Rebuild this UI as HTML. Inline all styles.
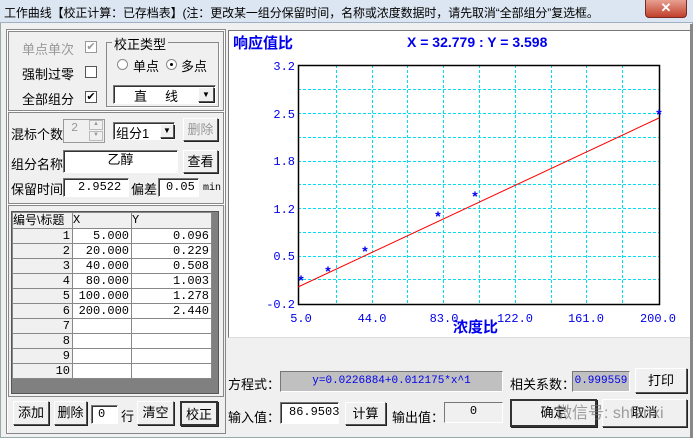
<!DOCTYPE html><html><head><meta charset="utf-8"><style>
*{margin:0;padding:0;box-sizing:border-box}
body{width:693px;height:438px;background:#f0f0f0;font-family:"Liberation Sans","Noto Sans CJK SC",sans-serif;font-size:13px;position:relative;overflow:hidden;color:#000}
.a{position:absolute}
.btn{position:absolute;background:#f0f0f0;border:1px solid;border-color:#fff #555 #555 #fff;box-shadow:1px 1px 0 #222;text-align:center;font-size:13px}
.sunk{position:absolute;background:#fff;border:1px solid;border-color:#777 #fff #fff #777;box-shadow:inset 1px 1px 0 #333}
.mono{font-family:"Liberation Mono","Noto Sans CJK SC",monospace;font-size:12px}
.cb{position:absolute;width:12px;height:12px;background:#fff;border:1px solid #555;font-size:11px;line-height:10px;text-align:center}
table{border-collapse:collapse}
td{border:1px solid #888;height:15px;font-family:"Liberation Mono",monospace;font-size:12px;text-align:right;padding-right:2px;line-height:13px}
</style></head><body>
<div class="a" style="left:0;top:0;width:693px;height:23px;background:#dce6f2;border-bottom:1px solid #a0b0c4"></div>
<div class="a" style="left:4px;top:4px;font-size:12px;white-space:nowrap;letter-spacing:-0.1px">工作曲线【校正计算：已存档表】(注：更改某一组分保留时间，名称或浓度数据时，请先取消“全部组分”复选框。</div>
<div class="a" style="left:645px;top:0;width:42px;height:18px;background:linear-gradient(#e8a090,#c0402c);border:1px solid #7a2a20;border-top:none;border-radius:0 0 4px 4px;color:#fff;text-align:center;font-weight:bold;line-height:16px">✕</div>
<div class="a" style="left:0;top:23px;width:693px;height:415px;border:1px solid #9aa;border-top:none;background:#f0f0f0"></div>
<div class="a" style="left:6px;top:29px;width:220px;height:405px;border:1px solid #888;box-shadow:inset 1px 1px 0 #fff"></div>
<div class="a" style="left:8px;top:31px;width:216px;height:80px;border:1px solid #888;box-shadow:1px 1px 0 #fff"></div>
<div class="a" style="left:22px;top:39px;color:#999">单点单次</div><div class="cb" style="left:85px;top:41px;color:#999;border-color:#999">✔</div>
<div class="a" style="left:22px;top:64px">强制过零</div><div class="cb" style="left:85px;top:66px"></div>
<div class="a" style="left:22px;top:89px">全部组分</div><div class="cb" style="left:85px;top:91px">✔</div>
<div class="a" style="left:106px;top:42px;width:113px;height:65px;border:1px solid #888;box-shadow:1px 1px 0 #fff"></div>
<div class="a" style="left:112px;top:34px;background:#f0f0f0;padding:0 2px">校正类型</div>
<div class="a" style="left:117px;top:59px;width:11px;height:11px;border:1px solid #888;border-radius:50%;background:#fff"></div>
<div class="a" style="left:133px;top:56px">单点</div>
<div class="a" style="left:166px;top:59px;width:11px;height:11px;border:1px solid #888;border-radius:50%;background:#fff"><div class="a" style="left:3px;top:3px;width:3px;height:3px;background:#000;border-radius:50%"></div></div>
<div class="a" style="left:181px;top:56px">多点</div>
<div class="sunk" style="left:113px;top:85px;width:103px;height:19px"></div>
<div class="a" style="left:134px;top:86px;letter-spacing:18px">直线</div>
<div class="btn" style="left:198px;top:87px;width:16px;height:15px;font-size:8px;line-height:13px">▼</div>
<div class="a" style="left:8px;top:112px;width:216px;height:92px;border:1px solid #888;box-shadow:1px 1px 0 #fff"></div>
<div class="a" style="left:11px;top:124px">混标个数</div>
<div class="a" style="left:63px;top:119px;width:42px;height:24px;border:1px solid #999"></div>
<div class="a mono" style="left:71px;top:121px;color:#999">2</div>
<div class="a" style="left:89px;top:120px;width:14px;height:10px;border:1px solid #bbb;font-size:6px;color:#999;text-align:center">▲</div>
<div class="a" style="left:89px;top:131px;width:14px;height:10px;border:1px solid #bbb;font-size:6px;color:#999;text-align:center">▼</div>
<div class="sunk" style="left:113px;top:122px;width:62px;height:18px"></div>
<div class="a" style="left:116px;top:123px">组分1</div>
<div class="btn" style="left:160px;top:124px;width:14px;height:14px;font-size:8px;line-height:12px">▼</div>
<div class="btn" style="left:183px;top:118px;width:35px;height:23px;color:#999;line-height:21px">删除</div>
<div class="a" style="left:11px;top:154px">组分名称</div>
<div class="sunk" style="left:63px;top:150px;width:115px;height:23px;text-align:center;line-height:18px">乙醇</div>
<div class="btn" style="left:183px;top:150px;width:35px;height:23px;line-height:21px">查看</div>
<div class="a" style="left:11px;top:179px">保留时间</div>
<div class="sunk mono" style="left:63px;top:178px;width:66px;height:19px;padding-left:14px;line-height:17px">2.9522</div>
<div class="a" style="left:131px;top:179px">偏差</div>
<div class="sunk mono" style="left:158px;top:178px;width:41px;height:19px;padding-left:7px;line-height:17px">0.05</div>
<div class="a mono" style="left:203px;top:183px;font-size:10px">min</div>
<div class="a" style="left:8px;top:205px;width:216px;height:192px;border:1px solid #888"></div>
<div class="a" style="left:11px;top:211px;width:208px;height:183px;background:#808080;border:1px solid #555"></div>
<table class="a" style="left:12px;top:212px;width:200px;background:#fff">
<tr><td style="width:60px;background:#f0f0f0;text-align:left;font-family:'Liberation Sans','Noto Sans CJK SC',sans-serif;padding:0;height:16px">编号\标题</td><td style="width:59px;text-align:left;background:#f0f0f0">X</td><td style="text-align:left;background:#f0f0f0">Y</td></tr>
<tr><td style="background:#f0f0f0">1</td><td>5.000</td><td>0.096</td></tr>
<tr><td style="background:#f0f0f0">2</td><td>20.000</td><td>0.229</td></tr>
<tr><td style="background:#f0f0f0">3</td><td>40.000</td><td>0.508</td></tr>
<tr><td style="background:#f0f0f0">4</td><td>80.000</td><td>1.003</td></tr>
<tr><td style="background:#f0f0f0">5</td><td>100.000</td><td>1.278</td></tr>
<tr><td style="background:#f0f0f0">6</td><td>200.000</td><td>2.440</td></tr>
<tr><td style="background:#f0f0f0">7</td><td></td><td></td></tr>
<tr><td style="background:#f0f0f0">8</td><td></td><td></td></tr>
<tr><td style="background:#f0f0f0">9</td><td></td><td></td></tr>
<tr><td style="background:#f0f0f0">10</td><td></td><td></td></tr>
</table>
<div class="btn" style="left:13px;top:401px;width:36px;height:24px;line-height:22px">添加</div>
<div class="btn" style="left:54px;top:401px;width:33px;height:24px;line-height:22px">删除</div>
<div class="sunk mono" style="left:91px;top:405px;width:27px;height:19px;padding-left:6px;line-height:17px">0</div>
<div class="a" style="left:121px;top:406px">行</div>
<div class="btn" style="left:137px;top:401px;width:37px;height:24px;line-height:22px">清空</div>
<div class="btn" style="left:180px;top:401px;width:38px;height:25px;line-height:23px;border:2px solid #333">校正</div>
<div class="a" style="left:228px;top:30px;width:463px;height:308px;background:#fff;border:1px solid;border-color:#777 #ddd #ddd #777"></div>
<div class="a" style="left:690px;top:24px;width:3px;height:414px;background:#888"></div>
<svg class="a" style="left:0;top:0" width="693" height="438" font-family="Liberation Mono,monospace" font-size="12" fill="#0000ee">
<text x="233" y="48" font-family="Liberation Sans,Noto Sans CJK SC,sans-serif" font-size="15" font-weight="bold">响应值比</text>
<text x="407" y="47" font-family="Liberation Sans,sans-serif" font-size="14" font-weight="bold">X = 32.779 : Y = 3.598</text>
<g stroke="#00e0f0" stroke-dasharray="3,2" stroke-width="1">
<line x1="298" x2="659" y1="89.5" y2="89.5"/><line x1="298" x2="659" y1="113.5" y2="113.5"/><line x1="298" x2="659" y1="137.5" y2="137.5"/><line x1="298" x2="659" y1="161.5" y2="161.5"/><line x1="298" x2="659" y1="184.5" y2="184.5"/><line x1="298" x2="659" y1="208.5" y2="208.5"/><line x1="298" x2="659" y1="232.5" y2="232.5"/><line x1="298" x2="659" y1="256.5" y2="256.5"/><line x1="298" x2="659" y1="279.5" y2="279.5"/>
<line y1="65" y2="304" x1="336.5" x2="336.5"/><line y1="65" y2="304" x1="372.5" x2="372.5"/><line y1="65" y2="304" x1="407.5" x2="407.5"/><line y1="65" y2="304" x1="443.5" x2="443.5"/><line y1="65" y2="304" x1="479.5" x2="479.5"/><line y1="65" y2="304" x1="515.5" x2="515.5"/><line y1="65" y2="304" x1="551.5" x2="551.5"/><line y1="65" y2="304" x1="586.5" x2="586.5"/><line y1="65" y2="304" x1="622.5" x2="622.5"/>
</g>
<rect x="298.5" y="65.5" width="361" height="239" fill="none" stroke="#000" stroke-width="1.5"/>
<line x1="298" y1="287" x2="659" y2="118" stroke="#f00" stroke-width="1"/>
<g font-size="14" font-weight="bold" text-anchor="middle" font-family="Liberation Sans,sans-serif">
<text x="301" y="285">*</text><text x="328" y="276">*</text><text x="365" y="256">*</text><text x="438" y="221">*</text><text x="475" y="201">*</text><text x="659" y="119">*</text></g>
<g text-anchor="end"><text x="295" y="70">3.2</text><text x="295" y="118">2.5</text><text x="295" y="165">1.8</text><text x="295" y="213">1.2</text><text x="295" y="260">0.5</text><text x="295" y="308">-0.2</text></g>
<g text-anchor="middle"><text x="301" y="322">5.0</text><text x="372" y="322">44.0</text><text x="444" y="322">83.0</text><text x="515" y="322">122.0</text><text x="586" y="322">161.0</text><text x="658" y="322">200.0</text></g>
<text x="453" y="332" font-family="Liberation Sans,Noto Sans CJK SC,sans-serif" font-size="15" font-weight="bold">浓度比</text>
</svg>
<div class="a" style="left:228px;top:374px">方程式：</div>
<div class="a mono" style="left:280px;top:371px;width:223px;height:21px;background:#c0c0c0;border:1px solid;border-color:#777 #fff #fff #777;color:#0000ee;text-align:center;line-height:19px;font-size:11px">y=0.0226884+0.012175*x^1</div>
<div class="a" style="left:510px;top:374px">相关系数：</div>
<div class="a mono" style="left:572px;top:371px;width:58px;height:21px;background:#c0c0c0;border:1px solid;border-color:#777 #fff #fff #777;color:#0000ee;text-align:center;line-height:19px;font-size:11px">0.999559</div>
<div class="btn" style="left:635px;top:368px;width:52px;height:25px;line-height:23px">打印</div>
<div class="a" style="left:228px;top:407px">输入值：</div>
<div class="sunk mono" style="left:280px;top:402px;width:59px;height:22px;padding-left:8px;line-height:18px">86.9503</div>
<div class="btn" style="left:345px;top:402px;width:41px;height:23px;line-height:21px">计算</div>
<div class="a" style="left:392px;top:407px">输出值：</div>
<div class="a mono" style="left:444px;top:402px;width:59px;height:21px;border:1px solid;border-color:#777 #fff #fff #777;text-align:center;line-height:17px">0</div>
<div class="btn" style="left:510px;top:399px;width:87px;height:28px;border:2px solid #333;line-height:24px">确定</div>
<div class="btn" style="left:602px;top:399px;width:85px;height:28px;line-height:26px">取消</div>
<div class="a" style="left:556px;top:399px;color:rgba(120,120,120,.7);font-size:16px">微信号: shfenxi</div>
</body></html>
